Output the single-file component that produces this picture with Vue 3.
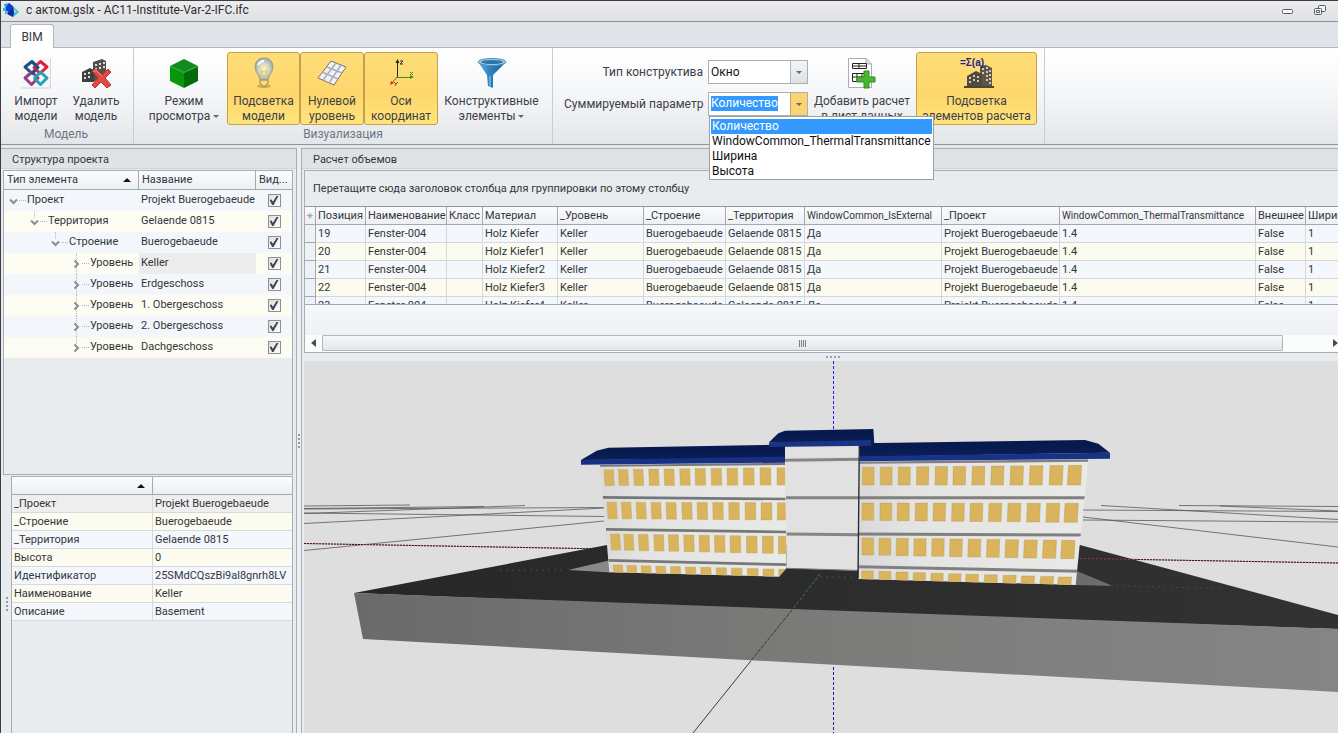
<script setup>
import { ref, onMounted } from 'vue'

const tree = [
  { type: 'Проект', name: 'Projekt Buerogebaeude', level: 0, open: true },
  { type: 'Территория', name: 'Gelaende 0815', level: 1, open: true },
  { type: 'Строение', name: 'Buerogebaeude', level: 2, open: true },
  { type: 'Уровень', name: 'Keller', level: 3, selected: true },
  { type: 'Уровень', name: 'Erdgeschoss', level: 3 },
  { type: 'Уровень', name: '1. Obergeschoss', level: 3 },
  { type: 'Уровень', name: '2. Obergeschoss', level: 3 },
  { type: 'Уровень', name: 'Dachgeschoss', level: 3, last: true }
]

const props = [
  ['_Проект', 'Projekt Buerogebaeude'],
  ['_Строение', 'Buerogebaeude'],
  ['_Территория', 'Gelaende 0815'],
  ['Высота', '0'],
  ['Идентификатор', '25SMdCQszBi9al8gnrh8LV'],
  ['Наименование', 'Keller'],
  ['Описание', 'Basement']
]

const columns = [
  { title: 'Позиция', width: 50 },
  { title: 'Наименование', width: 81 },
  { title: 'Класс', width: 36 },
  { title: 'Материал', width: 75 },
  { title: '_Уровень', width: 86 },
  { title: '_Строение', width: 82 },
  { title: '_Территория', width: 79 },
  { title: 'WindowCommon_IsExternal', width: 137, long: true },
  { title: '_Проект', width: 118 },
  { title: 'WindowCommon_ThermalTransmittance', width: 196, long: true },
  { title: 'Внешнее', width: 50 },
  { title: 'Ширина', width: 60 }
]

const rows = [19, 20, 21, 22, 23].map((n, i) => [
  n, 'Fenster-004', '', 'Holz Kiefer' + (i || ''), 'Keller', 'Buerogebaeude',
  'Gelaende 0815', 'Да', 'Projekt Buerogebaeude', '1.4', 'False', '1'
])

const options = ['Количество', 'WindowCommon_ThermalTransmittance', 'Ширина', 'Высота']
const param = ref('Количество')
const paramInput = ref(null)
onMounted(() => {
  paramInput.value.focus()
  paramInput.value.select()
})

// Facade windows: x positions per floor, top and bottom at the first and last window.
const leftFloors = [
  { xs: [132, 175, 220, 266, 312, 359, 405, 453, 501, 550, 600, 651], a: [164, 212], b: [158, 210] },
  { xs: [141, 184, 228, 273, 318, 365, 411, 458, 506, 555, 603, 652], a: [262, 311], b: [263, 315] },
  { xs: [151, 191, 235, 281, 325, 371, 417, 463, 510, 559, 607, 655], a: [357, 405], b: [364, 416] },
  { xs: [159, 200, 243, 287, 331, 376, 422, 468, 514, 562, 609, 656], a: [450, 480], b: [463, 490] }
]
const rightFloors = [
  { xs: [67, 121, 175, 230, 286, 340, 397, 454, 512, 570, 630, 685], a: [157, 210], b: [151, 210] },
  { xs: [66, 120, 172, 226, 280, 336, 391, 447, 504, 562, 620, 675], a: [264, 316], b: [265, 322] },
  { xs: [66, 117, 169, 222, 276, 330, 385, 441, 497, 553, 610, 665], a: [369, 420], b: [376, 431] },
  { xs: [65, 117, 168, 220, 273, 326, 378, 434, 490, 545, 602, 655], a: [468, 500], b: [486, 515] }
]
function panes(floors, base, grow, lean) {
  return floors.flatMap(f => f.xs.map((x, i) => {
    const t = i / 11
    const top = f.a[0] + (f.b[0] - f.a[0]) * t
    const bottom = f.a[1] + (f.b[1] - f.a[1]) * t
    const w = base + grow * t
    const s = lean > 0 ? lean * (1 - t) : lean * t
    return `${x},${top} ${x + w},${top} ${x + w + s},${bottom} ${x + s},${bottom}`
  }))
}
const leftPanes = panes(leftFloors, 28, 5, 3)
const rightPanes = panes(rightFloors, 35, 5, -3)
</script>

<template>
  <div class="app">
    <header class="titlebar">
      <svg class="logo" width="18" height="16" viewBox="0 0 18 16" aria-hidden="true">
        <path d="M2 2l6-1-1 4-4 1z" fill="#22a8e0" /><path d="M7 1l4 3-4 8-4-5z" fill="#1b35d8" />
        <path d="M11 4l6 6-6 5-6-3z" fill="#26c3c8" /><path d="M11 4l1 7-1 4-6-3z" fill="#1725a8" />
        <path d="M1 6h3v3H1zM3 9h3v3H3z" fill="#35b9dd" /><path d="M12 6l3 4-3 1z" fill="#8de6de" />
      </svg>
      <h1>с актом.gslx - AC11-Institute-Var-2-IFC.ifc</h1>
      <div class="winbtns">
        <button type="button" aria-label="Свернуть"><svg width="12" height="12" viewBox="0 0 12 12"><rect x=".5" y="5.5" width="10" height="4" rx="1" fill="#fff" stroke="#555b60" /></svg></button>
        <button type="button" aria-label="Восстановить"><svg width="12" height="12" viewBox="0 0 12 12"><g fill="#f4f5f6" stroke="#555b60"><rect x="4.500" y="1.500" width="7" height="6" rx="1" /><rect x=".5" y="4.500" width="7" height="6" rx="1" /><path d="M2.500 6.500h3v2h-3z" /></g></svg></button>
      </div>
    </header>

    <nav class="tabs" role="tablist"><button type="button" role="tab" aria-selected="true">BIM</button></nav>

    <section class="ribbon">
      <div class="group">
        <div class="tools">
          <button class="tool narrow" type="button">
            <svg width="32" height="32" viewBox="0 0 32 32">
              <rect x="1" y="1" width="30" height="30" fill="#f7f7f8" /><path d="M30.500 1v30H1" fill="none" stroke="#d3d5d8" />
              <g fill="none" stroke-width="3" stroke-linejoin="round">
                <path d="M12 4.500l6 6-6 6-7-6.500z" stroke="#17508c" />
                <path d="M20.500 4.500l6.500 5.500-7 6.500-6-6z" stroke="#dc2140" />
                <path d="M12 15l6 6-6.500 6.500L5 21z" stroke="#93407f" />
                <path d="M20.500 15l6.500 6-6.500 6.500-6-6z" stroke="#25a1b7" />
                <path d="M15 13l-3 3.500M18 11l-6-6.500" stroke="#17508c" />
              </g>
            </svg>
            <span>Импорт<br>модели</span>
          </button>
          <button class="tool narrow" type="button">
            <svg width="32" height="32" viewBox="0 0 32 32">
              <path d="M13 5l9-3 4 2v20H13z" fill="#53514f" /><path d="M2 15l8-4 4 2v12H2z" fill="#3f3f40" />
              <path d="M15 7h2v2h-2zM19 6h2v2h-2zM23 5h2v2h-2zM15 11h2v2h-2zM19 10h2v2h-2zM23 9h2v2h-2zM15 15h2v2h-2zM4 16h2v2H4zM8 15h2v2H8zM4 20h2v2H4zM8 19h2v2H8z" fill="#ddd" />
              <path d="M12 14l4-2 6 6 6-6 3 3-6 6 6 7-4 3-6-6-6 6-3-3 6-7z" fill="#e14a43" stroke="#b8312f" />
              <path d="M13 15l3-2 6 6" stroke="#f39a8e" fill="none" />
            </svg>
            <span>Удалить<br>модель</span>
          </button>
        </div>
        <div class="caption">Модель</div>
      </div>

      <div class="group">
        <div class="tools">
          <button class="tool mode" type="button">
            <svg width="32" height="32" viewBox="0 0 32 32"><path d="M16 2L2 9l14 7 14-7z" fill="#128a1f" /><path d="M2 9l14 6v16L2 24z" fill="#07970b" /><path d="M30 9l-14 6v16l14-7z" fill="#046b08" /><path d="M2 9l14 6.500L30 9" stroke="#4fb54c" fill="none" /></svg>
            <span>Режим<br>просмотра <i class="caret"></i></span>
          </button>
          <button class="tool on light" type="button" aria-pressed="true">
            <svg width="32" height="32" viewBox="0 0 32 32">
              <defs><radialGradient id="bulb"><stop offset="0" stop-color="#fff8b8" /><stop offset=".55" stop-color="#d6d7bf" /><stop offset="1" stop-color="#9cabae" /></radialGradient></defs>
              <ellipse cx="16" cy="29" rx="7" ry="2" fill="#9b8147" opacity=".5" />
              <path d="M16 1C10 1 7 5 7 10c0 5 4 7 5 13h8c1-6 5-8 5-13C25 5 22 1 16 1z" fill="url(#bulb)" stroke="#98a09a" />
              <path d="M14 22l-1-9 3 2 3-2-1 9" stroke="#f2c44e" fill="none" /><path d="M12 23h8v3l-2 3h-4l-2-3z" fill="#f5db79" stroke="#9c8a4c" />
              <path d="M10 8q2-4 6-4" stroke="#fff" stroke-width="2" fill="none" />
            </svg>
            <span>Подсветка<br>модели</span>
          </button>
          <button class="tool on zero" type="button" aria-pressed="true">
            <svg width="32" height="32" viewBox="0 0 32 32"><path d="M15 4l15 6-12 18L2 21z" fill="#f2f1f4" stroke="#77736d" /><path d="M20 6L7 23M25 8L13 26M11 10l15 6M6 15l16 7" stroke="#aaaeb8" stroke-width="1.500" /></svg>
            <span>Нулевой<br>уровень</span>
          </button>
          <button class="tool on axes" type="button" aria-pressed="true">
            <svg width="32" height="32" viewBox="0 0 32 32"><path d="M12.500 20V4" stroke="#292938" /><path d="M12 20.500h15" stroke="#38922a" /><path d="M12 20l-5 6" stroke="#c03a23" /><path d="M10.500 6l2-4 2 4z" fill="#222" /><path d="M25 18l4 2-4 2z" fill="#38922a" /><path d="M5 28l1-4 3 2z" fill="#b43a22" /><path d="M15 4h3l-3 3h3" stroke="#333" fill="none" /><path d="M25 15l3 3m0-3l-3 3" stroke="#38922a" /><path d="M9 25l2 2 2-2m-2 2l-1 2" stroke="#b43a22" fill="none" /></svg>
            <span>Оси<br>координат</span>
          </button>
          <button class="tool wide" type="button">
            <svg width="32" height="32" viewBox="0 0 32 32">
              <defs><linearGradient id="fun"><stop offset="0" stop-color="#63b6e4" /><stop offset=".4" stop-color="#2d83bf" /><stop offset="1" stop-color="#1c5d96" /></linearGradient></defs>
              <path d="M2 5l9 13 1 11 5 2V18L30 5z" fill="url(#fun)" /><ellipse cx="16" cy="5" rx="14" ry="3.500" fill="#a5cfe8" stroke="#468fbd" /><ellipse cx="16" cy="5" rx="11" ry="2" fill="#2d76a8" /><path d="M14 19v10" stroke="#a8d9f2" />
            </svg>
            <span>Конструктивные<br>элементы <i class="caret"></i></span>
          </button>
        </div>
        <div class="caption">Визуализация</div>
      </div>

      <div class="group">
        <div class="tools">
          <div class="fields">
            <label for="kind">Тип конструктива</label>
            <div class="combo">
              <select id="kind"><option>Окно</option></select>
              <span class="drop"><i class="caret"></i></span>
            </div>
            <label for="param">Суммируемый параметр</label>
            <div class="combo">
              <input id="param" ref="paramInput" v-model="param" type="text" role="combobox" aria-expanded="true" aria-controls="param-list" autocomplete="off" spellcheck="false">
              <button class="drop hot" type="button" aria-label="Открыть список"><i class="caret"></i></button>
              <ul id="param-list" role="listbox">
                <li v-for="o in options" :key="o" role="option" :aria-selected="o === param" @click="param = o">{{ o }}</li>
              </ul>
            </div>
          </div>
          <button class="tool sheet" type="button">
            <svg width="32" height="32" viewBox="0 0 32 32">
              <path d="M2.500 1.500h18l5 5v24h-23z" fill="#fff" stroke="#a9adb1" /><path d="M20 1v6h6" fill="#dedfe1" stroke="#a9adb1" />
              <path d="M6.500 6.500h14v5h-14zM6.500 16.500h14v8h-14zM6 9h14M13 6v6M11 16v9M16 16v9M6 20h14" fill="none" stroke="#252525" />
              <path d="M18 14h5v6h6v5h-6v6h-5v-6h-7v-5h7z" fill="#48b72d" stroke="#2c8d1c" />
            </svg>
            <span>Добавить расчет<br>в лист данных</span>
          </button>
          <button class="tool on calc" type="button" aria-pressed="true">
            <svg width="36" height="32" viewBox="0 0 36 32">
              <path d="M21 9l6-1 6 3v19H21z" fill="#5c5549" /><path d="M8 19l9-5 6 3v13H8z" fill="#4e4b45" />
              <path d="M23 11h2v2h-2zM27 10h2v2h-2zM30 13h2v2h-2zM23 15h2v2h-2zM27 14h2v2h-2zM30 17h2v2h-2zM27 18h2v2h-2zM30 21h2v2h-2zM27 22h2v2h-2zM30 25h2v2h-2zM10 20h2v2h-2zM14 18h2v2h-2zM18 19h2v2h-2zM10 24h2v2h-2zM14 22h2v2h-2zM18 23h2v2h-2z" fill="#d6cba6" />
              <path d="M5 30h30" stroke="#514430" stroke-width="2" />
              <text x="1" y="9" class="sigma">=Σ(a)</text>
            </svg>
            <span>Подсветка<br>элементов расчета</span>
          </button>
        </div>
      </div>
    </section>

    <main class="work">
      <aside class="panel left">
        <h2>Структура проекта</h2>
        <div class="treebox">
          <table class="tree">
            <colgroup><col class="c-type"><col><col class="c-vis"></colgroup>
            <thead><tr><th><div class="sorted">Тип элемента<i class="up"></i></div></th><th>Название</th><th>Вид...</th></tr></thead>
            <tbody>
              <tr v-for="r in tree" :key="r.name">
                <td>
                  <div class="node" :class="'lvl' + r.level">
                    <svg width="19" height="21" viewBox="0 0 19 21">
                      <g stroke="#b4b7ba" stroke-dasharray="1 1"><path v-if="r.level" d="M5.500 0v8" /><path v-if="r.level === 3 && !r.last" d="M5.500 14v7" /><path d="M11 10.500h7" /></g>
                      <path :d="r.open ? 'M2 9.500l3.500 3.500 3.500-3.500' : 'M3.500 7.500L7 11l-3.500 3.500'" fill="none" stroke="#8b8e91" stroke-width="2" />
                    </svg>{{ r.type }}
                  </div>
                </td>
                <td :class="{ selected: r.selected }">{{ r.name }}</td>
                <td class="vis"><input type="checkbox" checked :aria-label="'Видимость ' + r.name"></td>
              </tr>
            </tbody>
          </table>
        </div>
        <div class="propwrap">
          <div class="grip vertical"></div>
          <div class="propbox">
            <table class="props">
              <colgroup><col class="c-prop"><col></colgroup>
              <thead><tr><th aria-label="Свойство"><div class="sorted end"><i class="up"></i></div></th><th aria-label="Значение"></th></tr></thead>
              <tbody><tr v-for="p in props" :key="p[0]"><td>{{ p[0] }}</td><td>{{ p[1] }}</td></tr></tbody>
            </table>
          </div>
        </div>
      </aside>

      <div class="splitter"><div class="grip vertical"></div></div>

      <section class="panel right">
        <h2>Расчет объемов</h2>
        <div class="gridbox">
          <p class="hint">Перетащите сюда заголовок столбца для группировки по этому столбцу</p>
          <div class="clip">
            <table class="grid">
              <colgroup><col class="c-mark"><col v-for="c in columns" :key="c.title" :style="{ width: c.width + 'px' }"></colgroup>
              <thead><tr><th class="mark">✳</th><th v-for="c in columns" :key="c.title" :class="{ long: c.long }">{{ c.title }}</th></tr></thead>
              <tbody><tr v-for="r in rows" :key="r[0]"><td class="rowhead"></td><td v-for="(v, i) in r" :key="i">{{ v }}</td></tr></tbody>
            </table>
          </div>
          <div class="foot"></div>
          <div class="hscroll">
            <button type="button" aria-label="Влево"><i class="arrow back"></i></button>
            <div class="track"><div class="thumb"><i></i><i></i><i></i><i></i></div></div>
            <button type="button" aria-label="Вправо"><i class="arrow"></i></button>
          </div>
        </div>
        <div class="hsplit"><div class="grip"></div></div>

        <svg class="scene" viewBox="304 361 1034 372" preserveAspectRatio="xMinYMin slice" role="img" aria-label="Модель здания">
          <defs>
            <linearGradient id="slab"><stop offset="0" stop-color="#6a6a6a" /><stop offset=".5" stop-color="#7c7c7b" /><stop offset="1" stop-color="#858585" /></linearGradient>
            <linearGradient id="ground"><stop offset="0" stop-color="#272727" /><stop offset="1" stop-color="#323232" /></linearGradient>
            <linearGradient id="roof" x2="0" y2="1"><stop offset="0" stop-color="#06184c" /><stop offset="1" stop-color="#0b1f57" /></linearGradient>
            <linearGradient id="wall"><stop offset="0" stop-color="#d9d9d9" /><stop offset=".25" stop-color="#e4e4e3" /><stop offset="1" stop-color="#e9e9e8" /></linearGradient>
            <clipPath id="clipL"><path d="M120 150L675 143L680 458L657 485L148 472z" /></clipPath>
            <clipPath id="clipR"><path d="M58 140L745 133L707 510L55 492z" /></clipPath>
          </defs>
          <rect x="304" y="361" width="1034" height="372" fill="#dedede" />
          <g stroke="#55585a" stroke-width=".8">
            <path d="M304 506l106-1M304 508.500l180-2M304 513.500l221-8M304 523.500l300-15.500M304 509l300-1.500M304 513l300 3.500M304 550.500l300-29.500" />
            <path d="M1101 505.500l237 14M1083 510l255 1.500M1179 505.500l159 1M1220 506l118 5M1083 520l255 2M1083 517l255 30" />
          </g>
          <path d="M304 543.500l303 5.500M1081 558.500l257 4.500" stroke="#c98a90" /><path d="M304 543.500l303 5.500M1081 558.500l257 4.500" stroke="#2e1416" stroke-dasharray="2 1" />
          <path d="M354 593L607 545H1080L1338 615V629L820 612z" fill="url(#ground)" />
          <path d="M354 593L820 610L1338 629V692L820 664L363 639z" fill="url(#slab)" />
          <path d="M568 570l41-9.500 2 12z" fill="#898989" /><path d="M1077 571l36 15-38-1z" fill="#6c6c6d" />
          <path d="M1080 558.500l60 1" stroke="#a13c44" stroke-dasharray="2 2" />
          <path d="M500 570h65M820 577h35M1110 585.500l110 3" stroke="#484848" stroke-dasharray="2 4" />
          <g transform="translate(560 415) scale(.33333)">
            <path d="M120 150L675 143L680 458L657 485L148 472z" fill="url(#wall)" />
            <g clip-path="url(#clipL)">
              <g fill="#d9b45d" stroke="#b79a56" stroke-width="1"><polygon v-for="p in leftPanes" :key="p" :points="p" /></g>
              <path d="M120 151L680 146M128 247L680 252M138 343L680 351M146 436L680 449" stroke="#777" stroke-width="8" />
            </g>
            <path d="M675 93H898L895 467L680 460z" fill="#e1e1e1" />
            <path d="M675 136L898 133M678 248H898M680 357L898 359" stroke="#858585" stroke-width="9" />
            <path d="M680 460L895 466" stroke="#777" stroke-width="3" />
            <path d="M63 135L110 107L145 98L675 89V132z" fill="url(#roof)" />
            <path d="M63 135L675 125V143L63 149z" fill="#173083" />
          </g>
          <g transform="translate(840 415) scale(.33333)">
            <path d="M58 138L745 132L707 510L55 492z" fill="url(#wall)" />
            <g clip-path="url(#clipR)">
              <g fill="#d9b45d" stroke="#ab9052" stroke-width="1"><polygon v-for="p in rightPanes" :key="p" :points="p" /></g>
              <path d="M58 142L745 136M55 248H740M55 357L730 360M55 455L720 469" stroke="#808080" stroke-width="9" />
            </g>
            <path d="M60 85L735 75L775 86L810 113L60 126z" fill="url(#roof)" />
            <path d="M60 124L810 113V131L60 139z" fill="#183287" />
            <path d="M58 93L54 490" stroke="#25282c" stroke-width="4" />
          </g>
          <g transform="translate(560 415) scale(.33333)">
            <path d="M627 82L655 55L675 47L940 42L943 86L933 92z" fill="url(#roof)" />
            <path d="M627 82L933 75V92L627 96z" fill="#193486" />
          </g>
          <path d="M833.500 361V429" stroke="#1a1aff" stroke-dasharray="3 2" /><path d="M833.500 667V733" stroke="#1c18b0" stroke-dasharray="3 2" />
          <path d="M820 574l-28 36" stroke="#2f8a3e" stroke-dasharray="3 2" />
          <path d="M792 610l-42 52" stroke="#1f4a29" stroke-dasharray="4 1" /><path d="M750 662l-57 71" stroke="#2a4531" />
        </svg>
      </section>
    </main>
  </div>
</template>

<style>
body { margin: 0; overflow: hidden; }
</style>

<style scoped>
* { box-sizing: border-box; }
.app { height: 100vh; display: flex; flex-direction: column; background: #e4e8eb; border-left: 1px solid #3c3c44; border-top: 1px solid #3c3c44; overflow: hidden; color: #33363a; font: 11px/16px Roboto, "Liberation Sans", Arial, sans-serif; }
button { font: inherit; color: inherit; border: 0; padding: 0; background: none; }
h1, h2, p, ul { margin: 0; padding: 0; font-weight: normal; list-style: none; }

.titlebar { flex: none; height: 21px; display: flex; align-items: center; padding: 0 12px 3px 1px; background: linear-gradient(#ececed, #dfe1e4); border-bottom: 1px solid #8c9094; }
.titlebar h1 { margin-left: 6px; font: 12px/16px Roboto, "Noto Sans", sans-serif; color: #2d2d2d; }
.winbtns { margin-left: auto; display: flex; gap: 20px; }
.winbtns button, .winbtns svg { display: block; }

.tabs { flex: none; height: 25px; padding: 2px 9px 0; background: #e0e4e8; display: flex; }
.tabs button { position: relative; z-index: 1; width: 44px; height: 24px; background: #fff; border: 1px solid #b3b8bd; border-bottom: 0; border-radius: 3px 3px 0 0; font: 12px/22px Roboto, sans-serif; }

.ribbon { flex: none; height: 98px; display: flex; background: linear-gradient(#fff, #f6f7f9 45%, #e3e6e9); border-top: 1px solid #b3b8bd; border-bottom: 1px solid #8f959b; font: 12px/15px Roboto, "Noto Sans", sans-serif; color: #3c4148; }
.group { display: flex; flex-direction: column; padding: 4px 7px 0; border-right: 1px solid #c9cdd2; }
.group:first-child { padding: 4px 7px 0 5px; }
.tools { display: flex; height: 73px; }
.caption { text-align: center; line-height: 18px; color: #6c7684; }
.tool { display: flex; flex-direction: column; align-items: center; padding-top: 4px; border: 1px solid transparent; border-radius: 3px; white-space: nowrap; }
.tool svg { flex: none; }
.tool span { margin-top: 5px; }
.tool.on { background: linear-gradient(#fedd77, #fed76c 60%, #ffe47c); border-color: #c5a04a; }
.narrow { width: 60px; }
.mode { width: 86px; }
.light { width: 73px; }
.zero { width: 64px; }
.axes { width: 74px; }
.wide { width: 107px; }
.sheet { width: 108px; }
.calc { width: 121px; }
.sigma { font: bold 10px "Liberation Sans", sans-serif; fill: #241f8e; }
.caret { display: inline-block; vertical-align: middle; border: 3px solid transparent; border-top-color: #65696e; border-bottom: 0; }

.fields { display: grid; grid-template-columns: 139px 100px; gap: 8px 5px; align-content: start; align-items: center; padding: 8px 0 0 4px; white-space: nowrap; }
.fields label { text-align: right; }
.combo { position: relative; display: flex; height: 24px; border: 1px solid #abb0b5; background: #fff; color: #111; }
.combo select, .combo input { flex: 1; min-width: 0; width: 100%; border: 0; outline: 0; padding: 0 2px; appearance: none; background: none; color: inherit; font: inherit; }
.combo input { padding: 0 0 2px 2px; }
.combo input::selection { background: #3399ff; color: #fff; }
.drop { flex: none; width: 17px; display: grid; place-items: center; border-left: 1px solid #b5babf; background: linear-gradient(#f3f4f6, #dde1e5); }
.drop.hot { background: #fbd372; border-color: #c5a45b; }
.combo ul { position: absolute; z-index: 5; left: 0; top: 23px; min-width: 225px; border: 1px solid #9ba0a5; background: #fff; padding: 2px 1px 0; }
.combo li { padding: 0 0 0 1px; line-height: 15px; white-space: nowrap; }
.combo li[aria-selected="true"] { background: #3399ff; color: #fff; }

.work { flex: 1; min-height: 0; display: flex; padding-top: 3px; }
.panel { display: flex; flex-direction: column; min-width: 0; border-top: 1px solid #a8aeb3; background: #e8ecef; }
.panel h2 { flex: none; height: 20px; font: inherit; line-height: 21px; background: linear-gradient(#dde1e4, #e1e4e7); border-bottom: 1px solid #d0d5d9; padding-left: 11px; }
.left { flex: none; width: 296px; border-right: 1px solid #a8aeb3; }
.right { flex: 1; border-left: 1px solid #a8aeb3; padding-left: 2px; }
.right h2 { margin-left: -2px; }

table { border-collapse: separate; border-spacing: 0; table-layout: fixed; width: 100%; }
th, td { padding: 0 0 0 2px; font-weight: normal; text-align: left; white-space: nowrap; overflow: hidden; }
th { background: linear-gradient(#fbfcfd, #eceff4); border-right: 1px solid #a4a9ae; border-bottom: 1px solid #a4a9ae; height: 18px; }

.treebox { height: 305px; margin: 1px 3px 0 2px; border: 1px solid #a8aeb3; }
.tree th { height: 19px; padding-left: 3px; }
.tree th:last-child { border-right: 0; }
.c-type { width: 135px; }
.c-vis { width: 36px; }
.tree td { height: 21px; line-height: 20px; vertical-align: top; background: #f3f7fb; }
.tree tr:nth-child(even) td { background: #fdfcf3; }
.tree tr td.selected { background: #ececed; }
.tree td.vis { text-align: center; padding: 0; }
.node { display: flex; height: 21px; padding-left: 2px; }
.node svg { flex: none; }
.lvl1 { padding-left: 23px; }
.lvl2 { padding-left: 44px; }
.lvl3 { padding-left: 65px; }
.sorted { display: flex; align-items: center; justify-content: space-between; padding-right: 7px; }
.sorted.end { justify-content: flex-end; }
.up { border: 4px solid transparent; border-bottom-color: #151515; border-top: 0; }
.vis input { appearance: none; display: block; width: 13px; height: 13px; margin: 4px auto 0; border: 1px solid #8c9094; background: linear-gradient(135deg, #dcdee0, #fff); }
.vis input:checked::before { content: ""; display: block; width: 9px; height: 9px; margin: 1px; background: #42464b; clip-path: polygon(0 45%, 22% 40%, 38% 65%, 78% 0, 100% 0, 45% 100%, 30% 100%); }

.propwrap { flex: 1; min-height: 0; display: flex; padding-right: 3px; }
.propbox { flex: 1; border: 1px solid #a8aeb3; border-bottom: 0; margin-top: 1px; }
.c-prop { width: 141px; }
.props td { height: 18px; line-height: 17px; background: #f4f7fb; border-right: 1px solid #d6dade; border-bottom: 1px solid #d6dade; }
.props tr:nth-child(even) td { background: #fbfbef; }
.props tr:first-child td { background: #eeeeef; }
.props td:last-child, .props th:last-child { border-right: 0; }

.grip { width: 14px; height: 2px; background: repeating-linear-gradient(90deg, #969ca2 0 2px, transparent 2px 4px); }
.grip.vertical { align-self: center; width: 2px; height: 14px; background: repeating-linear-gradient(#969ca2 0 2px, transparent 2px 4px); }
.propwrap > .grip { flex: none; margin: 0 3px 0 5px; }
.splitter { flex: none; width: 4px; display: flex; justify-content: center; background: #eceff1; }

.gridbox { flex: none; margin-top: 1px; border: 1px solid #a8aeb3; border-right: 0; background: #e8ecef; }
.hint { padding-left: 8px; line-height: 35px; }
.clip { height: 99px; overflow: hidden; border-top: 1px solid #8f959b; border-bottom: 1px solid #a4a9ae; }
.grid { width: 1061px; }
.c-mark { width: 11px; }
.grid td { height: 18px; line-height: 17px; background: #f4f7fb; border-right: 1px solid #d3d8dc; border-bottom: 1px solid #d3d8dc; }
.grid tr:nth-child(even) td { background: #fbfbef; }
.grid tr td.rowhead { background: #eef1f5; border-color: #a4a9ae; }
.grid th.mark { padding: 0; text-align: center; color: #84898e; font-size: 9px; }
.grid th.long { font-size: 10px; }
.foot { height: 30px; background: linear-gradient(#f6f7fa, #eff1f4); }
.hscroll { display: flex; height: 17px; background: #fbfcfc; padding-bottom: 1px; }
.hscroll button { width: 17px; display: grid; place-items: center; }
.hscroll button:last-child { width: 5px; }
.arrow { border: 4px solid transparent; border-left: 5px solid #4a4e52; border-right: 0; }
.arrow.back { border-left: 0; border-right: 5px solid #4a4e52; }
.track { flex: 1; padding-right: 50px; display: flex; }
.thumb { flex: 1; display: flex; align-items: center; justify-content: center; gap: 1px; border: 1px solid #b1b6ba; border-radius: 1px; background: linear-gradient(#f6f7f8, #e3e5e8); }
.thumb i { width: 1px; height: 7px; background: #7b8085; }
.hsplit { flex: none; height: 8px; padding-left: 24px; display: flex; align-items: center; justify-content: center; }
.scene { flex: 1; min-height: 0; width: 100%; display: block; }
</style>
